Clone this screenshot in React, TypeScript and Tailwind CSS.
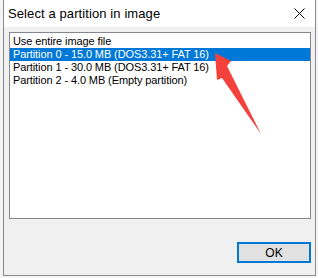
const items = [
  'Use entire image file',
  'Partition 0 - 15.0 MB (DOS3.31+ FAT 16)',
  'Partition 1 - 30.0 MB (DOS3.31+ FAT 16)',
  'Partition 2 - 4.0 MB (Empty partition)',
]

const selected = 1

// red annotation arrow drawn over the dialog
const Arrow = () => (
  <svg className="absolute left-0 top-0" width="318" height="278" viewBox="0 0 318 278">
    <polygon points="215,53 231,61 227,66 261,134 222,78 217,80" fill="#f4413b" />
  </svg>
)

export default function App() {
  return (
    <div className="relative w-[318px] h-[278px] overflow-hidden bg-[#f4f4f4]" style={{ fontFamily: '"Liberation Sans", Arial, sans-serif' }}>
      <div className="ml-[3px] w-[313px] h-[276px] flex flex-col border-x border-b border-[#8a8a8a] bg-[#f0f0f0]">
        {/* title bar */}
        <div className="h-[27px] flex items-center justify-between bg-white pl-[4px] pr-[10px]">
          <span className="text-[13px] tracking-[0.1px] text-black">Select a partition in image</span>
          <svg width="11" height="11" viewBox="0 0 11 11">
            <path d="M0.5 0.5 L10.5 10.5 M10.5 0.5 L0.5 10.5" stroke="#000" strokeWidth="1" />
          </svg>
        </div>
        <div className="flex-1 flex flex-col pl-[5px] pr-[4px] pt-[5px]">
          <div className="h-[187px] border border-[#828790] bg-white pt-[2px]">
            {items.map((label, i) => (
              <div
                key={label}
                className={`h-[13px] leading-[13px] text-[11px] tracking-[-0.1px] pl-[3px] ${i === selected ? 'bg-[#0078d7] text-white' : 'text-black'}`}
              >
                {label}
              </div>
            ))}
          </div>
          <div className="flex justify-end mt-[23px]">
            <button className="w-[74px] h-[21px] border-2 border-[#0078d7] bg-[#e1e1e1] text-[12px] text-black leading-none">
              OK
            </button>
          </div>
        </div>
      </div>
      <Arrow />
    </div>
  )
}
